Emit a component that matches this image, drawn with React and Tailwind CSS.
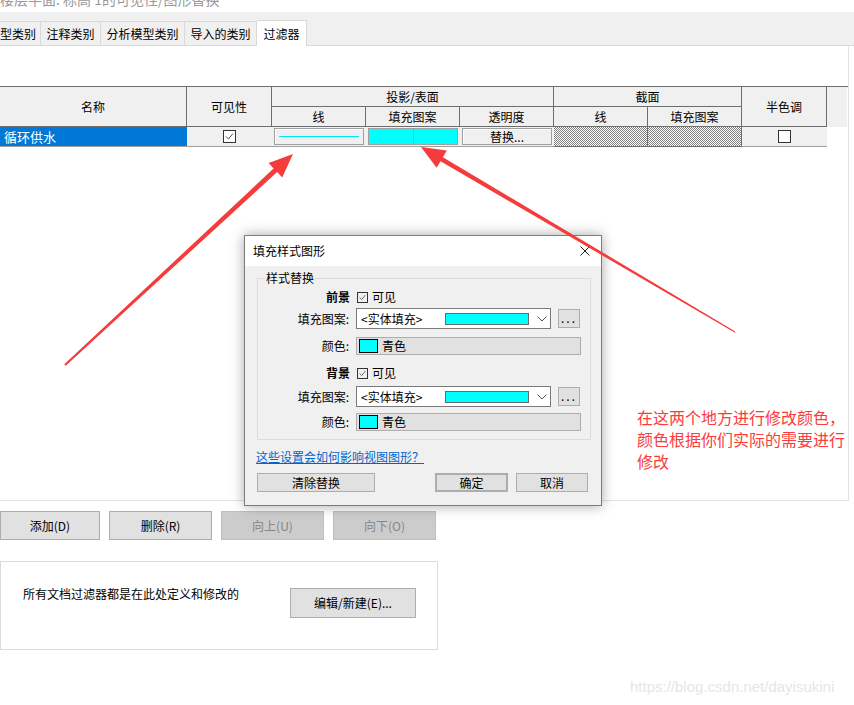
import React from 'react';

function Check({ size = 13, checked = true, bg = 'bg-white' }) {
  return (
    <div
      className={`${bg} border border-[#333333] flex items-center justify-center shrink-0`}
      style={{ width: size, height: size }}
    >
      {checked && (
        <svg width={size - 2} height={size - 2} viewBox="0 0 11 11">
          <path d="M2 5.5 L4.5 8 L9 2.5" stroke="#555" strokeWidth="1" fill="none" />
        </svg>
      )}
    </div>
  );
}

function Btn({ children, className = '', disabled = false }) {
  return (
    <div
      className={`flex items-center justify-center border leading-[16px] ${
        disabled
          ? 'bg-[#cccccc] border-[#bfbfbf] text-[#858585]'
          : 'bg-[#e1e1e1] border-[#adadad] text-black'
      } ${className}`}
    >
      {children}
    </div>
  );
}

function HeadCell({ children, className = '' }) {
  return (
    <div
      className={`bg-[#f0f0f0] border-r border-b border-[#6d6d6d] flex items-center justify-center leading-[16px] ${className}`}
    >
      {children}
    </div>
  );
}

function FillRow({ label }) {
  return (
    <div className="flex items-center h-[21px]">
      <div className="w-[91px] text-right leading-[16px]">{label}</div>
      <div className="ml-[7px] w-[195px] h-[21px] bg-white border border-[#7a7a7a] flex items-center pl-[4px]">
        <span className="w-[84px] leading-[16px]">&lt;实体填充&gt;</span>
        <div className="w-[84px] h-[12px] bg-[#00ffff] border border-[#6a6a6a]" />
        <svg className="ml-[8px]" width="10" height="6" viewBox="0 0 10 6">
          <path d="M0.5 0.5 L5 5 L9.5 0.5" stroke="#555" fill="none" />
        </svg>
      </div>
      <Btn className="ml-[7px] w-[22px] h-[19px] tracking-[2px] pb-[2px]">...</Btn>
    </div>
  );
}

function ColorRow() {
  return (
    <div className="flex items-center h-[18px]">
      <div className="w-[91px] text-right leading-[16px]">颜色:</div>
      <div className="ml-[7px] w-[225px] h-[18px] bg-[#e1e1e1] border border-[#adadad] flex items-center pl-[2px]">
        <div className="w-[19px] h-[14px] bg-[#00ffff] border border-black" />
        <span className="ml-[4px] leading-[16px]">青色</span>
      </div>
    </div>
  );
}

function VisibleRow({ label }) {
  return (
    <div className="flex items-center h-[16px]">
      <div className="w-[92px] text-right font-bold leading-[16px]">{label}</div>
      <div className="ml-[7px] flex items-center">
        <Check size={11} bg="bg-[#f0f0f0]" />
        <span className="ml-[4px] leading-[16px]">可见</span>
      </div>
    </div>
  );
}

export default function App() {
  const checker =
    'bg-[image:repeating-conic-gradient(#7f7f7f_0%_25%,#ffffff_0%_50%)] bg-[length:2px_2px]';

  return (
    <div className="relative w-[854px] h-[705px] overflow-hidden bg-white text-[12px] text-black font-['Noto_Sans_CJK_SC',sans-serif]">
      {/* window title, cut off */}
      <div className="h-[12px] overflow-hidden">
        <div className="-mt-[11px] text-[14px] leading-[20px] text-[#9a9a9a] whitespace-nowrap">
          楼层平面: 标高 1的可见性/图形替换
        </div>
      </div>

      {/* tabs */}
      <div className="h-[34px] bg-[#f0f0f0] border-b border-[#d9d9d9] flex items-end">
        <div className="w-[41px] h-[24px] border-r border-t border-[#d9d9d9] flex items-center leading-[16px]">型类别</div>
        <div className="w-[60px] h-[24px] border-r border-t border-[#d9d9d9] flex items-center justify-center leading-[16px]">注释类别</div>
        <div className="w-[84px] h-[24px] border-r border-t border-[#d9d9d9] flex items-center justify-center leading-[16px]">分析模型类别</div>
        <div className="w-[72px] h-[24px] border-r border-t border-[#d9d9d9] flex items-center justify-center leading-[16px]">导入的类别</div>
        <div className="w-[50px] h-[26px] -mb-px bg-white border-r border-t border-[#d9d9d9] flex items-center justify-center leading-[16px]">过滤器</div>
      </div>

      {/* filter table panel */}
      <div className="w-[849px] h-[455px] pt-[40px] border-r border-b border-[#e3e3e3]">
        <div className="grid grid-cols-[187px_85px_94px_94px_94px_94px_94px_85px_20px] grid-rows-[20px_20px_20px] border-t border-[#6d6d6d]">
          <HeadCell className="row-span-2">名称</HeadCell>
          <HeadCell className="row-span-2">可见性</HeadCell>
          <HeadCell className="col-span-3">投影/表面</HeadCell>
          <HeadCell className="col-span-2">截面</HeadCell>
          <HeadCell className="row-span-2">半色调</HeadCell>
          <div className="row-span-2 bg-[#f0f0f0]" />
          <HeadCell>线</HeadCell>
          <HeadCell>填充图案</HeadCell>
          <HeadCell>透明度</HeadCell>
          <HeadCell>线</HeadCell>
          <HeadCell>填充图案</HeadCell>

          <div className="bg-[#0078d7] text-white pl-[4px] flex items-center border-b border-[#a0a0a0] text-[13px] leading-[16px]">
            循环供水
          </div>
          <div className="bg-[#f0f0f0] border-b border-[#a0a0a0] flex items-center justify-center">
            <Check />
          </div>
          <div className="bg-[#f0f0f0] border-b border-[#a0a0a0] px-[2px] py-[1px]">
            <div className="h-full border border-[#a0a0a0] bg-[#f0f0f0] shadow-[inset_1px_1px_0_#ffffff] flex items-center px-[4px]">
              <div className="w-full h-px bg-[#00e8f0]" />
            </div>
          </div>
          <div className="bg-[#f0f0f0] border-b border-[#a0a0a0] px-[2px] py-[1px]">
            <div className="h-full border border-[#a0a0a0] bg-[#00ffff] flex">
              <div className="flex-1" />
              <div className="w-px bg-[#a0a0a0]" />
              <div className="flex-1" />
            </div>
          </div>
          <div className="bg-[#f0f0f0] border-b border-[#a0a0a0] px-[2px] py-[1px]">
            <div className="h-full border border-[#a0a0a0] bg-[#f0f0f0] shadow-[inset_1px_1px_0_#ffffff] flex items-center justify-center leading-[16px]">
              替换...
            </div>
          </div>
          <div className={`${checker} border-r border-b border-[#6d6d6d]`} />
          <div className={`${checker} border-r border-b border-[#6d6d6d]`} />
          <div className="bg-[#f0f0f0] border-b border-[#a0a0a0] flex items-center justify-center">
            <Check checked={false} />
          </div>
          <div />
        </div>
      </div>

      {/* row buttons */}
      <div className="mt-[10px] flex h-[29px]">
        <Btn className="w-[100px]">添加(D)</Btn>
        <Btn className="ml-[9px] w-[103px]">删除(R)</Btn>
        <Btn disabled className="ml-[9px] w-[103px]">向上(U)</Btn>
        <Btn disabled className="ml-[9px] w-[103px]">向下(O)</Btn>
      </div>

      {/* info box */}
      <div className="mt-[21px] w-[438px] h-[89px] border border-[#dcdcdc] flex items-start pl-[22px] pt-[24px]">
        <div className="w-[267px] leading-[16px]">所有文档过滤器都是在此处定义和修改的</div>
        <Btn className="mt-[2px] w-[126px] h-[30px]">编辑/新建(E)...</Btn>
      </div>

      {/* dialog */}
      <div className="absolute left-[244px] top-[235px] w-[358px] h-[271px] bg-[#f0f0f0] border border-[#7c7c7c] shadow-[0_0_12px_rgba(0,0,0,0.35)]">
        <div className="h-[30px] bg-white flex items-center justify-between pl-[8px] pr-[11px]">
          <span className="leading-[16px]">填充样式图形</span>
          <svg width="10" height="10" viewBox="0 0 10 10">
            <path d="M0.5 0.5 L9.5 9.5 M9.5 0.5 L0.5 9.5" stroke="#222" strokeWidth="1" />
          </svg>
        </div>
        <div className="px-[12px]">
          <div className="relative mt-[12px] w-[334px] border border-[#dcdcdc] pt-[10px] pb-[8px]">
            <span className="absolute left-[7px] -top-[9px] bg-[#f0f0f0] px-[1px] leading-[16px]">样式替换</span>
            <VisibleRow label="前景" />
            <div className="mt-[3px]"><FillRow label="填充图案:" /></div>
            <div className="mt-[8px]"><ColorRow /></div>
            <div className="mt-[10px]"><VisibleRow label="背景" /></div>
            <div className="mt-[5px]"><FillRow label="填充图案:" /></div>
            <div className="mt-[6px]"><ColorRow /></div>
          </div>
          <div className="mt-[9px] h-[16px] leading-[16px] text-[#0066cc] underline -ml-px">这些设置会如何影响视图图形？</div>
          <div className="mt-[8px] flex h-[19px]">
            <Btn className="w-[118px]">清除替换</Btn>
            <Btn className="ml-[60px] w-[73px] border-2 border-[#0078d7]">确定</Btn>
            <Btn className="ml-[8px] w-[72px]">取消</Btn>
          </div>
        </div>
      </div>

      {/* annotation arrows */}
      <svg className="absolute left-0 top-0 pointer-events-none" width="854" height="705" viewBox="0 0 854 705">
        <polygon
          fill="#f53c3c"
          points="64.3,364.2 65.7,365.8 277.2,172.1 282.2,177.6 293,154 268.6,162.9 273.6,168.5"
        />
        <polygon
          fill="#f53c3c"
          points="735.5,333 734.5,331 442.9,157.2 446.8,150.6 421,147 436.6,167.8 440.5,161.2"
        />
      </svg>

      <div className="absolute left-[637px] top-[406px] text-[16px] leading-[22px] text-[#fa3c3c] whitespace-nowrap">
        <div>在这两个地方进行修改颜色，</div>
        <div>颜色根据你们实际的需要进行</div>
        <div>修改</div>
      </div>

      <div className="absolute left-[630px] top-[678px] text-[15px] leading-[18px] text-[#e6e6e6] font-['Liberation_Sans',sans-serif]">
        https://blog.csdn.net/dayisukini
      </div>
    </div>
  );
}
